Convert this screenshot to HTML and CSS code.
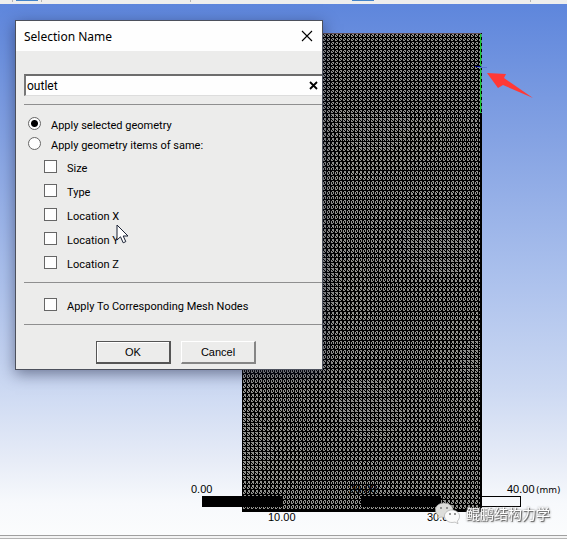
FILE: index.html
```html
<!DOCTYPE html>
<html lang="en">
<head>
<meta charset="utf-8">
<title>Selection Name</title>
<link rel="stylesheet" href="styles.css">
</head>
<body>
<div class="toolbar"><i class="tick t1"></i><i class="tab t2"></i><i class="tick t3"></i><i class="tick t4"></i><i class="tab t5"></i><i class="tick t6"></i></div>
<main class="viewport">
  <svg class="scene" width="567" height="531" viewBox="0 4 567 531">
    <g shape-rendering="crispEdges">
      <rect x="242" y="33" width="240" height="479" fill="#000"/>
      <path id="cells" fill="#91918d"/>
      <path d="M323 33.500h158" stroke="#5f4c54"/>
      <path d="M480.500 34v79" stroke="#16c52a"/>
      <path d="M481.500 34v79" stroke="#4d9e75" stroke-dasharray="3 3"/>
      <path d="M475 66.500h6" stroke="#000080"/><path d="M478 67.500h9" stroke="#5d78d0"/>
      <path d="M202 496h80v11h-80zM361 496h80v11h-80z" fill="#000"/>
      <path d="M482 496.500h38.500v10h-38.500" fill="none" stroke="#000"/>
    </g>
    <path d="M487 73l19 1-2 4 29 20-30-13-5 3z" fill="#ff3936"/>
    <g class="scale">
      <text x="191" y="493">0.00</text><text x="268" y="521">10.00</text><text x="349" y="493">20.00</text>
      <text x="427" y="521">30.00</text><text x="507" y="493">40.00</text><text class="unit" x="536" y="493">(mm)</text>
    </g>
    <g stroke="#a0a0a0" stroke-width=".6">
      <path d="M444 503c-5 0-8.500 3-8.500 7 0 2.500 1 4 3 5.500l-1 3 3.500-1.500c6 1.500 12-2 12-7 0-4-4-7-9-7z" fill="#dededb"/>
      <path d="M452 510c-4 0-7.500 2.500-7.500 6s3.500 6.500 7.500 6.500l3-.4 3 1.600-.7-2.600c1.500-1.300 2.200-3 2.200-5 0-3.500-3.500-6.100-7.500-6.100z" fill="#fafafa"/>
    </g>
    <g fill="#777"><circle cx="441" cy="508" r="1"/><circle cx="447" cy="508" r="1"/><circle cx="450" cy="514" r="1"/><circle cx="455" cy="514" r="1"/></g>
    <text class="mark" x="466" y="519">鲲鹏结构力学</text>
  </svg>

  <form class="dialog">
    <header class="title"><h1>Selection Name</h1>
      <button class="close" type="button" aria-label="Close"><svg width="12" height="12" viewBox="0 0 12 12"><path d="M1 1l10 10M11 1L1 11" stroke="#000" stroke-width="1.100"/></svg></button>
    </header>
    <div class="field">
      <input class="name" type="text" value="outlet" aria-label="Name">
      <button class="clear" type="button" aria-label="Clear"><svg width="9" height="9" viewBox="0 0 9 9"><path d="M1 1l7 7M8 1L1 8" stroke="#000" stroke-width="1.800"/></svg></button>
    </div>
    <section class="options">
      <label class="radio"><input type="radio" name="mode" checked><span>Apply selected geometry</span></label>
      <label class="radio"><input type="radio" name="mode"><span>Apply geometry items of same:</span></label>
      <label class="check"><input type="checkbox"><span>Size</span></label>
      <label class="check"><input type="checkbox"><span>Type</span></label>
      <label class="check"><input type="checkbox"><span>Location X</span></label>
      <label class="check"><input type="checkbox"><span>Location Y</span></label>
      <label class="check"><input type="checkbox"><span>Location Z</span></label>
    </section>
    <section class="mesh"><label class="check"><input type="checkbox"><span>Apply To Corresponding Mesh Nodes</span></label></section>
    <footer class="actions"><button class="btn ok" type="submit">OK</button><button class="btn" type="button">Cancel</button></footer>
    <svg class="cursor" width="13" height="20" viewBox="0 0 13 20"><path d="M1 1v15l3.500-3.200 2.700 6 2.600-1.200-2.600-5.600H12z" fill="#fff" stroke="#182033"/></svg>
  </form>
</main>
<div class="status"></div>
<script src="mesh.js"></script>
</body>
</html>
```
FILE: mesh.js
```js
// Fills the mesh body with triangulated cells: a grid of grey cells, each cut
// by a diagonal whose phase drifts slowly across the part.
(function () {
  const left = 242, top = 34, right = 480, bottom = 511, fineEnd = 114;
  let d = "";
  for (let y = top; y < bottom;) {
    const next = y < fineEnd ? y + 4 : Math.floor(fineEnd + (Math.floor((y - fineEnd) / 4.83 + 0.3) + 1) * 4.83);
    const h = Math.min(next, bottom) - y - 1;
    for (let x = left + 1; x < right; x += 4) {
      const wave = Math.sin(x / 38 + y / 90) + Math.sin(y / 31 - x / 70);
      const phase = y < fineEnd ? 0 : wave * 0.35 - 0.2;
      for (let r = 0; r < h; r++) {
        const cut = Math.round((r + phase) * 0.75);
        for (let c = 0; c < 3; c++) {
          if (c !== cut && x + c < right) d += `M${x + c} ${y + r}h1v1h-1z`;
        }
      }
    }
    y = next;
  }
  document.getElementById("cells").setAttribute("d", d);
})();
```
FILE: styles.css
```css
* { box-sizing: border-box; }
body {
  margin: 0;
  min-height: 100vh;
  display: flex;
  flex-direction: column;
  overflow: hidden;
  background: #f4f4f4;
  font-family: Roboto, "Noto Sans CJK SC", sans-serif;
  color: #000;
}
.toolbar {
  display: flex;
  height: 4px;
  padding-left: 12px;
  background: #eeeeed;
}
.tick { width: 1px; height: 2px; background: #b5b5b5; }
.tab { width: 22px; height: 1px; background: #4484c8; }
.t2 { margin: 0 3px; }
.t4 { margin-left: 148px; }
.t5 { margin-left: 161px; }
.t6 { margin-left: 156px; }
.viewport {
  position: relative;
  flex: 1;
  background: linear-gradient(#5e86dc 0, #84a2e3 25%, #a9bfec 50%, #cbd8f2 72%, #e7ecf7 86%, #f7f9fc 94%, #fbfcfd 100%);
}
.scene { display: block; }
.scale { font: 11px "Liberation Sans", sans-serif; }
.unit { font: 9px "DejaVu Sans", sans-serif; }
.mark {
  font: 14px "Noto Sans CJK SC", sans-serif;
  fill: #fff;
  filter: drop-shadow(1px 1px 0 #777) drop-shadow(0 0 1px #888);
}
.status {
  height: 4px;
  background: #f4f4f4;
  border-top: 1px solid #a0a0a0;
  border-bottom: 1px solid #b4b4b4;
}
.dialog {
  position: absolute;
  left: 15px;
  top: 16px;
  width: 308px;
  border: 1px solid #4c505c;
  background: #ececeb;
  box-shadow: 0 4px 14px rgba(20, 25, 55, 0.5);
  font-size: 11px;
}
.title {
  display: flex;
  align-items: center;
  justify-content: space-between;
  height: 30px;
  padding: 0 9px 0 8px;
  background: #fefefe;
}
h1 { margin: 0; font: 12px "Noto Sans", sans-serif; }
button { padding: 0; border: 0; color: #000; }
.close, .clear { display: flex; background: none; }
.field {
  display: flex;
  align-items: center;
  height: 22px;
  margin: 23px 0 8px 8px;
  padding-right: 4px;
  background: #fefefe;
  border: 1px solid #777;
  border-top: 2px solid #6d6d6d;
  border-left: 2px solid #777;
  border-right: 0;
  border-bottom-color: #ddd;
}
.name {
  flex: 1;
  min-width: 0;
  padding: 0 1px;
  border: 0;
  outline: 0;
  background: none;
  font: 12px Roboto, sans-serif;
}
.options, .mesh { margin-left: 8px; border-top: 1px solid #8f8f8f; }
.options { height: 178px; padding-top: 10px; }
.mesh { height: 43px; padding-top: 10px; border-bottom: 1px solid #8f8f8f; }
label { display: flex; align-items: flex-start; }
label span { padding-top: 3px; line-height: 16px; }
.radio { height: 20px; padding-left: 4px; gap: 10px; }
.check { height: 24px; padding-left: 20px; gap: 10px; }
label input {
  appearance: none;
  flex: none;
  width: 13px;
  height: 13px;
  margin: 2px 0 0;
  border: 1px solid #666;
  background: #fefefe;
}
.check input { margin-top: 5px; }
.check span { padding-top: 6px; }
.radio input { border-radius: 50%; }
.radio input:checked { background: radial-gradient(circle, #000 3px, #fefefe 4px); }
.actions {
  display: flex;
  gap: 10px;
  height: 44px;
  padding: 16px 0 0 80px;
}
.btn {
  width: 75px;
  height: 23px;
  background: #ececeb;
  border: 1px solid #fff;
  border-right: 2px solid #858585;
  border-bottom: 2px solid #858585;
  font: 11px "Liberation Sans", sans-serif;
}
.ok { border: 1px solid #555; border-right: 2px solid #555; border-bottom: 2px solid #555; box-shadow: inset 1px 1px #fff; }
.cursor { position: absolute; left: 100px; top: 203px; }
```
